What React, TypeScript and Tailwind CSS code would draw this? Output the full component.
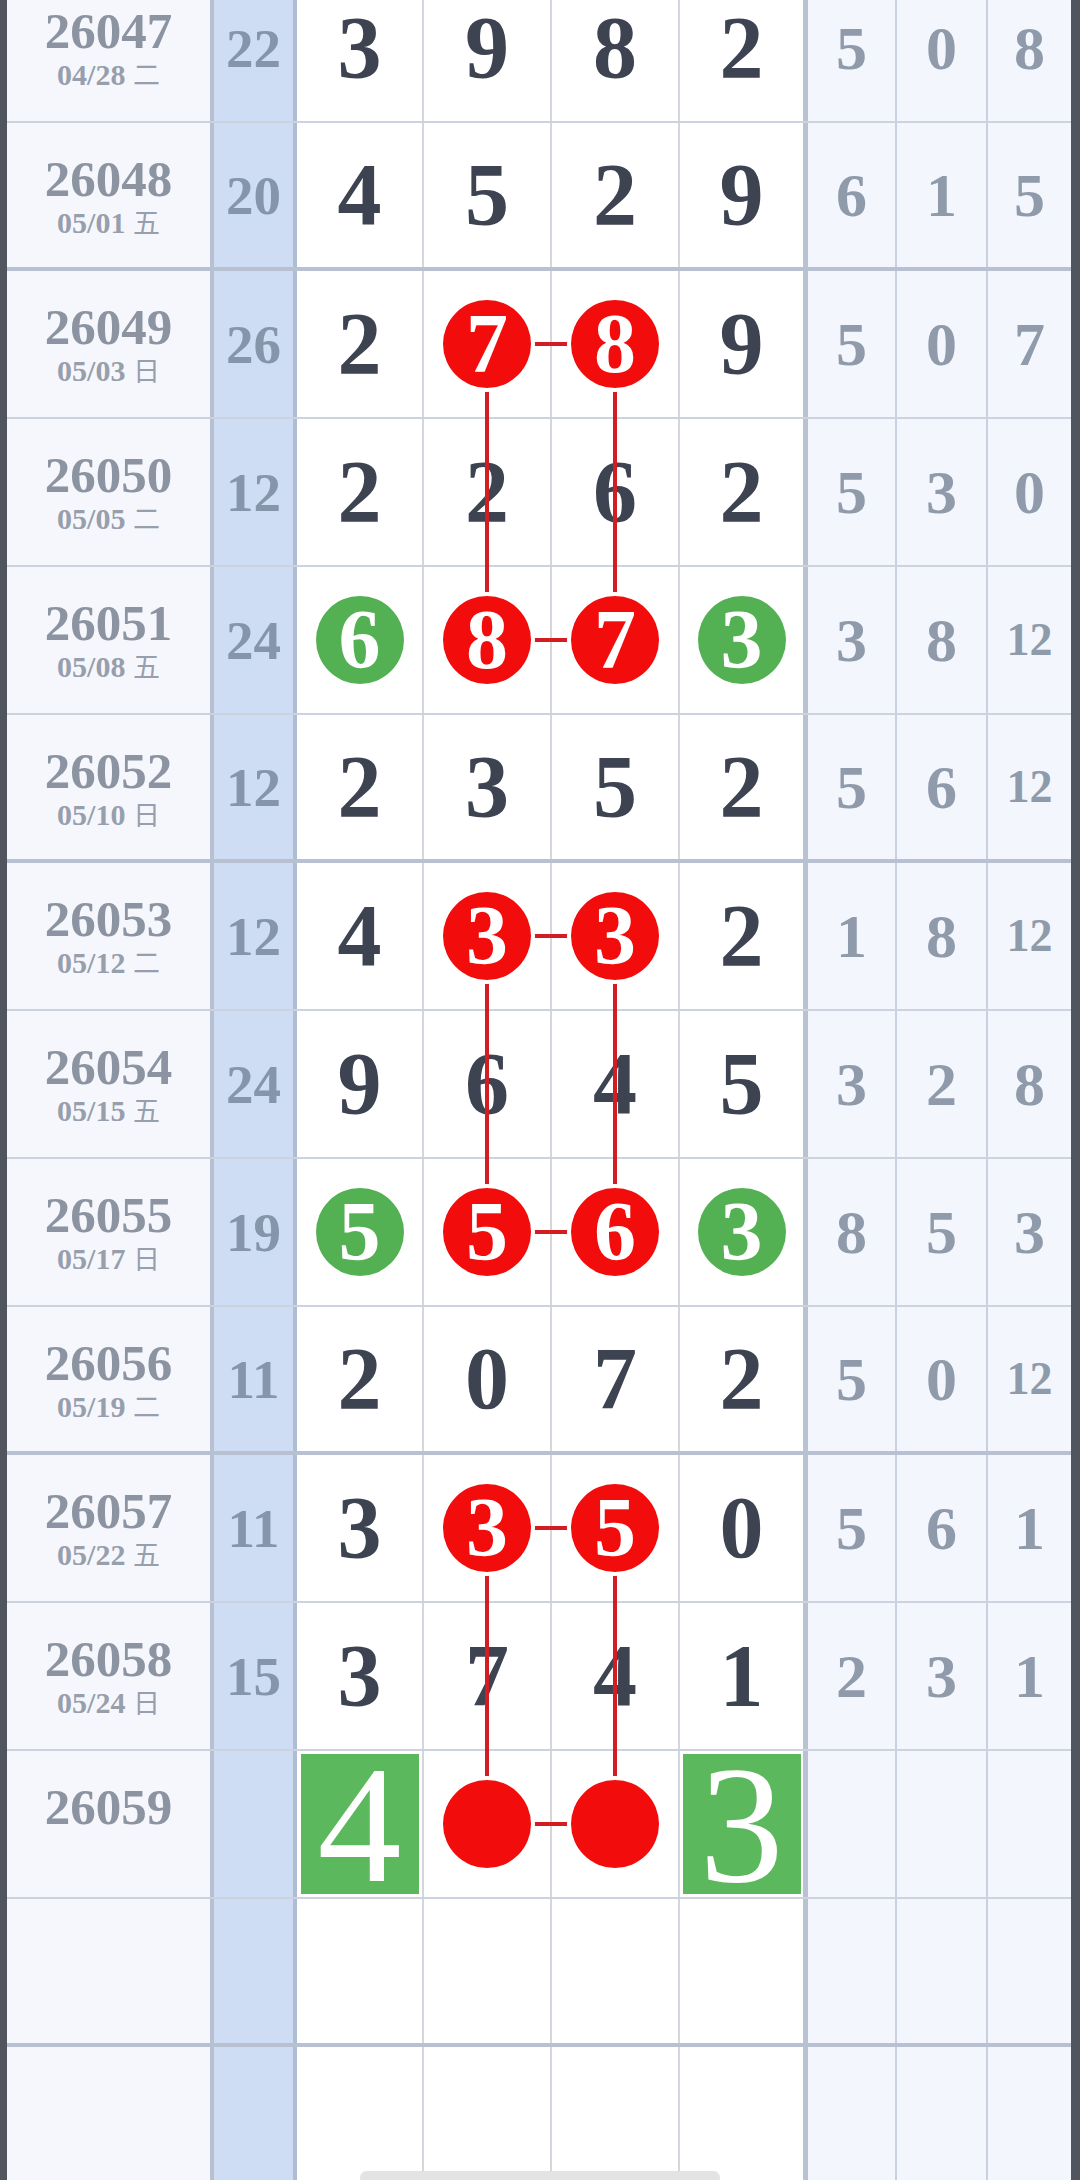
import React from 'react';

type Mark = 'red' | 'green' | 'sq' | 'dot' | '';

interface DrawRow {
  issue?: string;
  date?: string;
  week?: string;
  sum?: string;
  nums: string[];
  marks?: Mark[];
  link?: boolean;
  right: string[];
}

const pair: Mark[] = ['', 'red', 'red', ''];
const full: Mark[] = ['green', 'red', 'red', 'green'];

const rows: DrawRow[] = [
  { issue: '26047', date: '04/28', week: '二', sum: '22', nums: ['3', '9', '8', '2'], right: ['5', '0', '8'] },
  { issue: '26048', date: '05/01', week: '五', sum: '20', nums: ['4', '5', '2', '9'], right: ['6', '1', '5'] },
  { issue: '26049', date: '05/03', week: '日', sum: '26', nums: ['2', '7', '8', '9'], marks: pair, link: true, right: ['5', '0', '7'] },
  { issue: '26050', date: '05/05', week: '二', sum: '12', nums: ['2', '2', '6', '2'], right: ['5', '3', '0'] },
  { issue: '26051', date: '05/08', week: '五', sum: '24', nums: ['6', '8', '7', '3'], marks: full, right: ['3', '8', '12'] },
  { issue: '26052', date: '05/10', week: '日', sum: '12', nums: ['2', '3', '5', '2'], right: ['5', '6', '12'] },
  { issue: '26053', date: '05/12', week: '二', sum: '12', nums: ['4', '3', '3', '2'], marks: pair, link: true, right: ['1', '8', '12'] },
  { issue: '26054', date: '05/15', week: '五', sum: '24', nums: ['9', '6', '4', '5'], right: ['3', '2', '8'] },
  { issue: '26055', date: '05/17', week: '日', sum: '19', nums: ['5', '5', '6', '3'], marks: full, right: ['8', '5', '3'] },
  { issue: '26056', date: '05/19', week: '二', sum: '11', nums: ['2', '0', '7', '2'], right: ['5', '0', '12'] },
  { issue: '26057', date: '05/22', week: '五', sum: '11', nums: ['3', '3', '5', '0'], marks: pair, link: true, right: ['5', '6', '1'] },
  { issue: '26058', date: '05/24', week: '日', sum: '15', nums: ['3', '7', '4', '1'], right: ['2', '3', '1'] },
  { issue: '26059', nums: ['4', '', '', '3'], marks: ['sq', 'dot', 'dot', 'sq'], right: ['', '', ''] },
  { nums: ['', '', '', ''], right: ['', '', ''] },
  { nums: ['', '', '', ''], right: ['', '', ''] },
];

const digitWidths = ['w-[127px]', 'w-[128px]', 'w-[128px]', 'w-[128px]'];
const rightWidths = ['w-[89px] border-r-2 border-[#c9d1e1]', 'w-[91px] border-r-2 border-[#c9d1e1]', 'w-[83px]'];

const Ball = ({ mark, value }: { mark: Mark; value: string }) => {
  if (mark === 'sq') {
    return (
      <div className="flex h-[140px] w-[118px] items-center justify-center bg-[#5cb85c] text-[168px] font-normal leading-none text-white">
        {value}
      </div>
    );
  }
  const bg = mark === 'green' ? 'bg-[#53b153]' : 'bg-[#f20c0c]';
  return (
    <div
      className={`relative z-20 flex h-[88px] w-[88px] items-center justify-center rounded-full ${bg} text-[84px] font-bold leading-none text-white shadow-[0_0_0_4px_#ffffff]`}
    >
      {mark === 'dot' ? '' : value}
    </div>
  );
};

const Row = ({ row, thick }: { row: DrawRow; thick: boolean }) => (
  <div className={`flex h-[148px] ${thick ? 'border-b-4 border-[#b7c1d2]' : 'border-b-2 border-[#ccd3df]'}`}>
    <div className="flex w-[207px] shrink-0 flex-col items-center border-r-4 border-[#b6c0d1] bg-[#f5f7fd] pt-[32px] font-bold">
      {row.issue && <div className="text-[51px] leading-[48px] text-[#8c94a1]">{row.issue}</div>}
      {row.date && (
        <div className="mt-[1px] text-[30px] leading-[36px] text-[#979fac]">
          {row.date} <span className="font-['Noto_Sans_CJK_SC',sans-serif] text-[27px] font-normal">{row.week}</span>
        </div>
      )}
    </div>

    <div className="flex w-[83px] shrink-0 items-center justify-center border-r-4 border-[#afbdd3] bg-[#cedcf4] text-[55px] font-bold leading-none text-[#8595aa]">
      {row.sum}
    </div>

    {row.nums.map((n, i) => {
      const mark = row.marks ? row.marks[i] : '';
      const border = i === 3 ? 'border-r-[5px] border-[#b9c2d1]' : 'border-r-2 border-[#d3d6dc]';
      return (
        <div key={i} className={`relative flex ${digitWidths[i]} shrink-0 items-center justify-center bg-white ${border}`}>
          {mark ? (
            <Ball mark={mark} value={n} />
          ) : (
            <span className="text-[88px] font-bold leading-none text-[#3d4351]">{n}</span>
          )}
          {i === 1 && (mark === 'red' || mark === 'dot') && (
            <div className="absolute left-1/2 top-[calc(50%-2px)] z-10 h-[4px] w-[128px] bg-[#d21d22]" />
          )}
          {row.link && (i === 1 || i === 2) && (
            <div className="absolute left-[calc(50%-2px)] top-1/2 z-10 h-[296px] w-[4px] bg-[#d21d22]" />
          )}
        </div>
      );
    })}

    {row.right.map((v, i) => (
      <div
        key={i}
        className={`flex shrink-0 items-center justify-center bg-[#f3f6fc] font-bold leading-none text-[#8f9aab] ${rightWidths[i]} ${v.length > 1 ? 'text-[46px]' : 'text-[62px]'}`}
      >
        {v}
      </div>
    ))}
  </div>
);

const App = () => {
  return (
    <div className="relative h-[2180px] w-[1080px] overflow-hidden bg-white font-['Liberation_Serif',serif]">
      <div className="-mt-[25px] border-l-[7px] border-r-[9px] border-[#51565e]">
        {rows.map((row, idx) => (
          <Row key={idx} row={row} thick={idx % 4 === 1} />
        ))}
      </div>
      <div className="absolute bottom-[-4px] left-[360px] h-[13px] w-[360px] rounded-full bg-[#e3e3e3]" />
    </div>
  );
};

export default App;
